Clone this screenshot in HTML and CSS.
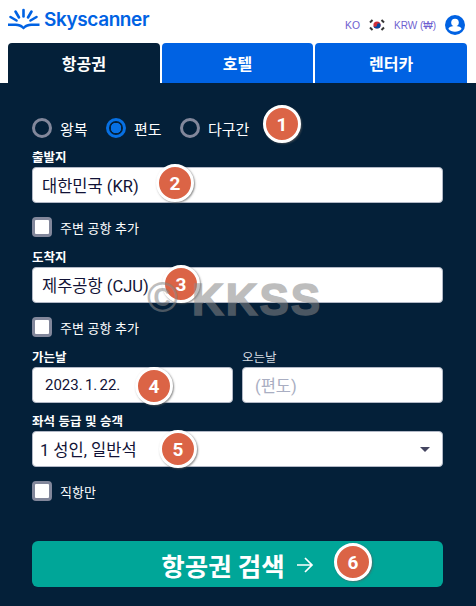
FILE: index.html
```html
<!DOCTYPE html>
<html lang="ko">
<head>
    <meta charset="UTF-8">
    <meta name="viewport" content="width=device-width, initial-scale=1.0">
    <title>Skyscanner</title>
    <link rel="stylesheet" href="styles.css">
</head>
<body>
    <header class="top-bar">
        <div class="logo">
            <svg class="logo-mark" width="32" height="22" viewBox="0 0 32 22" fill="none">
                <g stroke="#0062e3" stroke-width="2.6" stroke-linecap="round">
                    <path d="M15.5 2v6.500"/>
                    <path d="M7.500 3.500l3.500 6"/>
                    <path d="M23.500 3.500l-3.500 6"/>
                    <path d="M2.500 9l6 3.500"/>
                    <path d="M28.500 9l-6 3.500"/>
                </g>
                <path d="M0 15.500h8c3 0 5.500 .8 7.500 3 2-2.200 4.500-3 7.500-3h8.500v2.500h-8c-2.500 0-5 .8-8 3.500-3-2.700-5.500-3.500-8-3.500h-7.500z" fill="#0062e3"/>
            </svg>
            <span class="logo-text">Skyscanner</span>
        </div>
        <div class="locale">
            <span class="locale-text">KO</span>
            <svg class="flag" width="16" height="12" viewBox="0 0 16 12">
                <circle cx="8" cy="6" r="3.600" fill="#cd2e3a"/>
                <path d="M4.400 6a3.600 3.600 0 0 0 7.200 0c0-1-.8-1.800-1.800-1.800S8 5 8 6s-.8 1.800-1.800 1.800S4.400 7 4.400 6z" fill="#0047a0"/>
                <g stroke="#333" stroke-width="2">
                    <path d="M1 3.500l2.500-2.500"/>
                    <path d="M12.500 1l2.500 2.500"/>
                    <path d="M1 8.500l2.500 2.500"/>
                    <path d="M12.500 11l2.500-2.500"/>
                </g>
            </svg>
            <span class="locale-text krw">KRW (₩)</span>
            <svg class="account" width="20" height="20" viewBox="0 0 20 20">
                <circle cx="10" cy="10" r="10" fill="#0062e3"/>
                <circle cx="10" cy="7.500" r="3.800" fill="#fff"/>
                <path d="M3.500 14c0-1.800 3-3 6.500-3s6.500 1.200 6.500 3c-1.400 1.700-3.800 2.800-6.500 2.800s-5.100-1.100-6.500-2.800z" fill="#fff"/>
            </svg>
        </div>
    </header>

    <nav class="tabs">
        <div class="tab active">항공권</div>
        <div class="tab">호텔</div>
        <div class="tab">렌터카</div>
    </nav>

    <main class="panel">
        <div class="trip-types">
            <div class="radio-option"><span class="radio"></span>왕복</div>
            <div class="radio-option"><span class="radio checked"></span>편도</div>
            <div class="radio-option"><span class="radio"></span>다구간</div>
        </div>

        <div class="field from-field">
            <div class="field-label">출발지</div>
            <div class="input">대한민국 (KR)</div>
        </div>
        <div class="check-option"><span class="checkbox"></span>주변 공항 추가</div>

        <div class="field to-field">
            <div class="field-label">도착지</div>
            <div class="input">제주공항 (CJU)</div>
        </div>
        <div class="check-option"><span class="checkbox"></span>주변 공항 추가</div>

        <div class="date-row">
            <div class="field">
                <div class="field-label">가는날</div>
                <div class="input date-input">2023. 1. 22.</div>
            </div>
            <div class="field">
                <div class="field-label light">오는날</div>
                <div class="input date-input muted">(편도)</div>
            </div>
        </div>

        <div class="field seat-field">
            <div class="field-label">좌석 등급 및 승객</div>
            <div class="input select">1 성인, 일반석<span class="caret"></span></div>
        </div>
        <div class="check-option direct"><span class="checkbox"></span>직항만</div>

        <div class="search-btn">항공권 검색
            <svg class="arrow" width="18" height="18" viewBox="0 0 18 18" fill="none">
                <path d="M1 9h15M9 2l7 7-7 7" stroke="#fff" stroke-width="1.700"/>
            </svg>
        </div>

        <!-- numbered callouts and watermark sit on top of the form -->
        <span class="badge b1">1</span>
        <span class="badge b2">2</span>
        <span class="badge b3">3</span>
        <span class="badge b4">4</span>
        <span class="badge b5">5</span>
        <span class="badge b6">6</span>
        <div class="watermark"><span class="watermark-mark">©</span><span class="watermark-text">KKSS</span></div>
    </main>
</body>
</html>
```

FILE: styles.css
```css
* {
    box-sizing: border-box;
}
html, body {
    height: 100%;
}
body {
    margin: 0;
    display: flex;
    flex-direction: column;
    overflow: hidden;
    background-color: #fff;
    font-family: "Liberation Sans", "Noto Sans CJK KR", sans-serif;
}
.top-bar {
    height: 43px;
    display: flex;
    justify-content: space-between;
    padding: 8px 11px 0 8px;
}
.logo {
    display: flex;
    align-items: flex-start;
    gap: 4px;
}
.logo-text {
    font-family: Inter, sans-serif;
    font-size: 19px;
    font-weight: 600;
    line-height: 24px;
    letter-spacing: -0.4px;
    color: #0062e3;
}
.locale {
    display: flex;
    align-items: center;
    height: 32px;
    margin-top: 1px;
}
.locale-text {
    font-size: 10.4px;
    color: #6f5fd0;
}
.krw {
    font-size: 10px;
}
.flag {
    margin: 0 9px;
}
.account {
    margin-left: 9px;
}
.tabs {
    display: flex;
    gap: 2px;
    padding: 0 9px 0 8px;
    height: 40px;
}
.tab {
    flex: 1;
    display: flex;
    align-items: center;
    justify-content: center;
    background-color: #0062e3;
    color: #fff;
    font-size: 16px;
    font-weight: 700;
    border-radius: 4px 4px 0 0;
}
.tab.active {
    background-color: #042039;
}
.panel {
    flex: 1;
    position: relative;
    background-color: #042039;
    padding: 35px 33px 0 32px;
    color: #fff;
}
.trip-types {
    display: flex;
    height: 20px;
    margin-bottom: 13px;
}
.radio-option {
    display: flex;
    align-items: center;
    gap: 8px;
    width: 74px;
    font-size: 15px;
}
.radio {
    width: 20px;
    height: 20px;
    border: 3px solid #82879b;
    border-radius: 50%;
}
.radio.checked {
    border-color: #0770e3;
    background: radial-gradient(circle, #0770e3 0 5px, transparent 5.5px);
}
.field-label {
    font-size: 12.500px;
    font-weight: 700;
    line-height: 14px;
    height: 14px;
    margin-bottom: 2px;
}
.field-label.light {
    font-weight: 400;
    color: #d8dde3;
}
.input {
    height: 36px;
    display: flex;
    align-items: center;
    padding: 0 9px;
    background-color: #fff;
    border: 1px solid #b2b8c6;
    border-radius: 4px;
    color: #111236;
    font-family: Roboto, "Noto Sans CJK KR", sans-serif;
    font-size: 16.500px;
}
.check-option {
    display: flex;
    align-items: center;
    gap: 8px;
    height: 20px;
    margin: 14px 0;
    font-size: 13px;
}
.checkbox {
    width: 20px;
    height: 20px;
    background-color: #fff;
    border: 3px solid #82879b;
    border-radius: 4px;
}
.date-row {
    display: grid;
    grid-template-columns: 201px 201px;
    gap: 9px;
}
.date-input {
    padding: 0 12px;
    font-size: 15px;
    word-spacing: -1.500px;
}
.muted {
    font-size: 16.500px;
    color: #a9aec2;
}
.seat-field {
    margin-top: 12px;
}
.select {
    justify-content: space-between;
    padding: 0 12px 0 7px;
}
.caret {
    width: 0;
    height: 0;
    border: 5px solid transparent;
    border-top: 5px solid #444560;
    border-bottom: 0;
}
.direct {
    margin-bottom: 40px;
}
.search-btn {
    height: 46px;
    display: flex;
    align-items: center;
    justify-content: center;
    gap: 11px;
    background-color: #00a698;
    border-radius: 6px;
    font-size: 25.500px;
    font-weight: 700;
    word-spacing: -1px;
}
.arrow {
    margin-top: 2px;
}
.watermark {
    position: absolute;
    left: 147px;
    top: 192px;
    display: flex;
    align-items: center;
    gap: 14px;
    color: #878787;
    opacity: 0.54;
    font-family: "Liberation Sans", sans-serif;
    font-weight: 700;
    line-height: 50px;
}
.watermark-mark {
    font-size: 42px;
    margin-top: -4px;
}
.watermark-text {
    font-size: 44px;
    letter-spacing: 2px;
    -webkit-text-stroke: 1.500px #878787;
}
.badge {
    position: absolute;
    width: 38px;
    height: 38px;
    display: flex;
    align-items: center;
    justify-content: center;
    background-color: #db6446;
    border: 3px solid #fff;
    border-radius: 50%;
    box-shadow: 1px 1px 2px rgba(90, 90, 90, 0.7);
    color: #fff;
    font-family: Roboto, sans-serif;
    font-size: 19px;
    font-weight: 700;
}
.b1 { left: 263px; top: 22px; }
.b2 { left: 156px; top: 81px; }
.b3 { left: 162px; top: 182px; }
.b4 { left: 135px; top: 284px; }
.b5 { left: 159px; top: 347px; }
.b6 { left: 334px; top: 460px; }
```
